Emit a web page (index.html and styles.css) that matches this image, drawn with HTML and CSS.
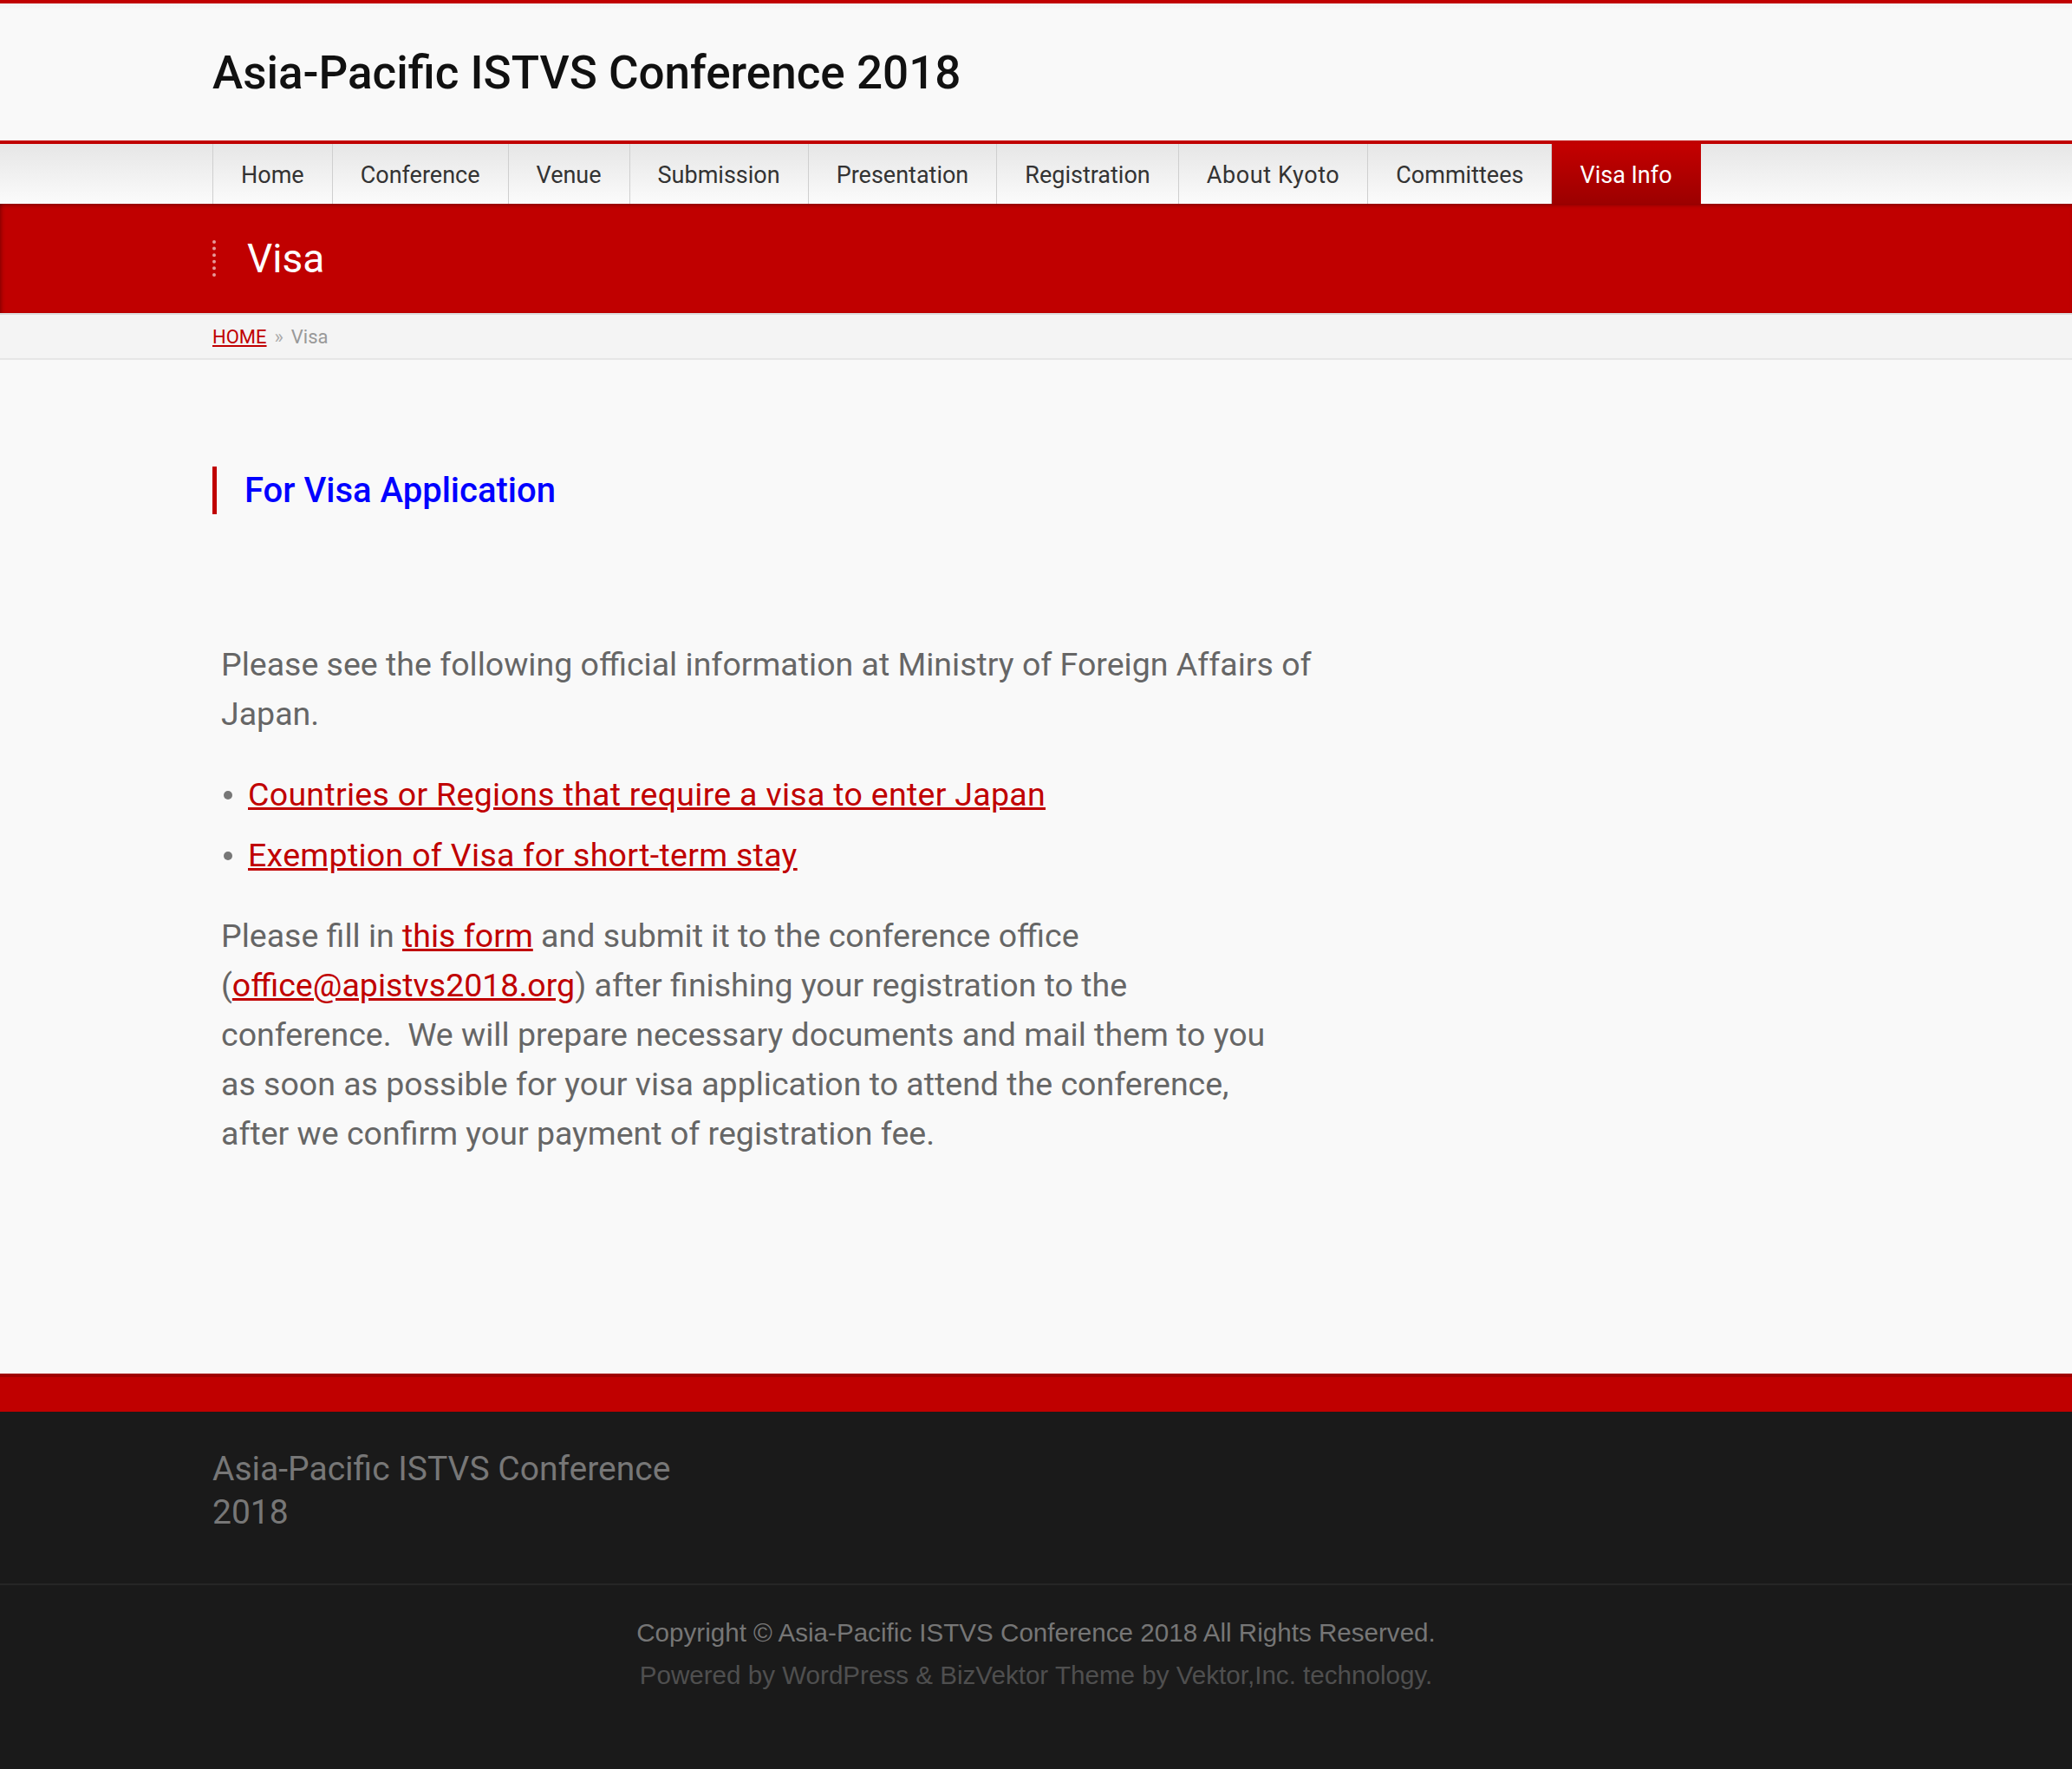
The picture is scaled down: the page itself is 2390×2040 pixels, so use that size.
FILE: index.html
```html
<!DOCTYPE html>
<html lang="en">
<head>
<meta charset="utf-8">
<title>Visa | Asia-Pacific ISTVS Conference 2018</title>
<link rel="stylesheet" href="styles.css">
</head>
<body>
<header class="site-header">
  <div class="container">
    <h1 class="site-title">Asia-Pacific ISTVS Conference 2018</h1>
  </div>
</header>
<nav class="global-nav">
  <div class="container">
    <ul class="nav-list">
      <li class="nav-item">Home</li>
      <li class="nav-item">Conference</li>
      <li class="nav-item">Venue</li>
      <li class="nav-item">Submission</li>
      <li class="nav-item">Presentation</li>
      <li class="nav-item">Registration</li>
      <li class="nav-item nav-wide">About Kyoto</li>
      <li class="nav-item">Committees</li>
      <li class="nav-item active">Visa Info</li>
    </ul>
  </div>
</nav>
<div class="page-title-bar">
  <div class="container">
    <h2 class="page-title">Visa</h2>
  </div>
</div>
<div class="breadcrumb-bar">
  <div class="container breadcrumb">
    <a class="crumb-link" href="#">HOME</a><span class="crumb-sep">»</span><span class="crumb-current">Visa</span>
  </div>
</div>
<main class="container content">
  <h3 class="section-heading">For Visa Application</h3>
  <div class="entry">
    <p class="entry-text">Please see the following official information at Ministry of Foreign Affairs of<br>Japan.</p>
    <ul class="link-list">
      <li class="link-item"><a href="#">Countries or Regions that require a visa to enter Japan</a></li>
      <li class="link-item"><a href="#">Exemption of Visa for short-term stay</a></li>
    </ul>
    <p class="entry-text">Please fill in <a href="#">this form</a> and submit it to the conference office<br>(<a href="#">office@apistvs2018.org</a>) after finishing your registration to the<br>conference.&nbsp; We will prepare necessary documents and mail them to you<br>as soon as possible for your visa application to attend the conference,<br>after we confirm your payment of registration fee.</p>
  </div>
</main>
<footer class="site-footer">
  <div class="footer-band"></div>
  <div class="footer-main">
    <div class="container">
      <div class="footer-title">Asia-Pacific ISTVS Conference 2018</div>
    </div>
  </div>
  <div class="footer-bottom">
    <p class="copyright">Copyright © Asia-Pacific ISTVS Conference 2018 All Rights Reserved.</p>
    <p class="powered">Powered by WordPress &amp; BizVektor Theme by Vektor,Inc. technology.</p>
  </div>
</footer>
</body>
</html>
```
FILE: styles.css
```css
* { box-sizing: border-box; }
html, body { margin: 0; padding: 0; }
body {
  background: #f9f9f9;
  border-top: 4px solid #c00000;
  font-family: "Roboto", "Noto Sans CJK JP", sans-serif;
  color: #666;
  min-height: 2040px;
  display: flex;
  flex-direction: column;
}
.container {
  width: 1900px;
  margin: 0 auto;
}
/* header */
.site-header {
  height: 162px;
  border-bottom: 4px solid #c00000;
  display: flex;
  align-items: center;
  background: linear-gradient(#f2f2f2 0, #f9f9f9 8px, #f9f9f9 100%);
}
.site-title {
  margin: 0;
  font-weight: 500;
  font-size: 53px;
  color: #111;
  padding-top: 2px;
}
/* nav */
.global-nav {
  height: 69px;
  background: linear-gradient(#e6e6e6, #fbfbfb);
}
.nav-list {
  list-style: none;
  margin: 0;
  padding: 0;
  display: flex;
  height: 69px;
  border-left: 1px solid #cfcfcf;
}
.nav-item {
  border-right: 1px solid #cfcfcf;
  padding: 0 32px;
  display: flex;
  align-items: center;
  font-size: 27px;
  color: #333;
  padding-top: 3px;
}
.nav-wide { letter-spacing: 0.6px; }
.nav-item.active {
  background: linear-gradient(#c40000, #9c0000);
  color: #fff;
  border-right-color: #c00000;
}
/* page title */
.page-title-bar {
  height: 126px;
  background: #c00000;
  box-shadow: inset 0 4px 4px -2px rgba(0,0,0,0.25), inset 4px 0 4px -2px rgba(0,0,0,0.25);
  display: flex;
  align-items: center;
}
.page-title {
  margin: 0;
  font-weight: 400;
  font-size: 46px;
  color: #fff;
  line-height: 42px;
  padding-left: 36px;
  border-left: 4px dotted rgba(255,255,255,0.6);
}
/* breadcrumb */
.breadcrumb-bar {
  height: 54px;
  background: #f4f4f4;
  border-top: 2px solid #dcdcdc;
  border-bottom: 2px solid #e6e6e6;
  display: flex;
  align-items: center;
}
.breadcrumb {
  font-size: 22px;
  color: #999;
}
.crumb-link { color: #c00000; }
.crumb-sep { margin: 0 9px; color: #aaa; }
/* content */
.content {
  padding-top: 123px;
  padding-bottom: 248px;
}
.section-heading {
  margin: 0;
  border-left: 5px solid #c00000;
  padding-left: 32px;
  height: 55px;
  display: flex;
  align-items: center;
  font-size: 40px;
  font-weight: 500;
  color: #0000ff;
}
.entry {
  padding-left: 10px;
  margin-top: 145px;
}
.entry-text {
  margin: 0;
  font-size: 37.5px;
  line-height: 57px;
  color: #666;
}
.entry a { color: #c00000; }
.link-list {
  list-style: none;
  margin: 36px 0 36px;
  padding: 0;
}
.link-item {
  font-size: 37.5px;
  line-height: 57px;
  margin-bottom: 13px;
  display: flex;
  align-items: center;
}
.link-item:last-child { margin-bottom: 0; }
.link-item::before {
  content: "";
  width: 10px;
  height: 10px;
  border-radius: 50%;
  background: #777;
  margin: 0 18px 0 3px;
}
.link-item a { letter-spacing: 0.3px; }
/* footer */
.site-footer {
  flex: 1;
  display: flex;
  flex-direction: column;
  background: #1a1a1a;
}
.footer-band {
  height: 44px;
  background: #c00000;
  border-top: 4px solid #a00000;
}
.footer-main {
  background: #1a1a1a;
  padding: 41px 0 57px;
  border-bottom: 2px solid #262626;
}
.footer-title {
  width: 580px;
  font-size: 39px;
  line-height: 50px;
  color: #777;
}
.footer-bottom {
  background: #1a1a1a;
  flex: 1;
  text-align: center;
  font-family: "Liberation Sans", Arial, sans-serif;
  padding-top: 30px;
}
.copyright {
  margin: 0;
  font-size: 29.6px;
  line-height: 49px;
  color: #767676;
}
.powered {
  margin: 0;
  font-size: 29.6px;
  line-height: 49px;
  color: #4f4f4f;
}
```
